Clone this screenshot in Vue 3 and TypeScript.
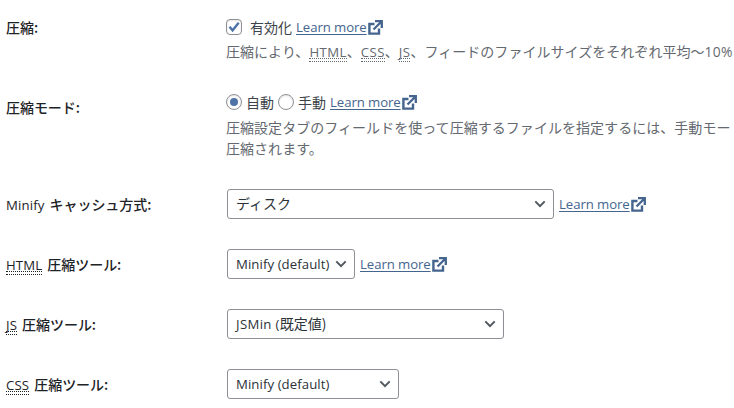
<script setup lang="ts">
import { ref, h } from 'vue'

const enabled = ref(true)
const mode = ref('auto')

interface Tool {
  abbr?: string
  latin?: string
  label: string
  latinValue?: string
  value?: string
  size: string
  more?: boolean
}

const tools: Tool[] = [
  { latin: 'Minify', label: 'キャッシュ方式:', value: 'ディスク', size: 'wide', more: true },
  { abbr: 'HTML', label: '圧縮ツール:', latinValue: 'Minify (default)', size: 'narrow', more: true },
  { abbr: 'JS', label: '圧縮ツール:', latinValue: 'JSMin (', value: '既定値)', size: 'medium' },
  { abbr: 'CSS', label: '圧縮ツール:', latinValue: 'Minify (default)', size: 'small' },
]

const LearnMore = () =>
  h('a', { class: 'more', href: '#' }, [
    h('span', { class: 'more-text' }, 'Learn more'),
    h('svg', { class: 'external', viewBox: '0 0 15 15' }, [
      h('path', { d: 'M6.5 4H1.4v9.6H11V8.5', fill: 'none', stroke: 'currentColor', 'stroke-width': '2.4' }),
      h('path', { d: 'M7 1.2h6.8v6.8M13.5 1.5 5.5 9.5', fill: 'none', stroke: 'currentColor', 'stroke-width': '2.3' }),
    ]),
  ])
</script>

<template>
  <main class="form">
    <section class="row row-enable">
      <div class="label">圧縮:</div>
      <div class="field">
        <div class="line">
          <label class="choice">
            <input v-model="enabled" type="checkbox" class="native" />
            <span class="box"><svg v-if="enabled" viewBox="0 0 16 16"><path d="M3.5 7.7 6.6 11.3 12.7 3.8" /></svg></span>
            <span class="enable-text">有効化</span>
          </label>
          <LearnMore />
        </div>
        <p class="hint">圧縮により、<abbr>HTML</abbr>、<abbr>CSS</abbr>、<abbr>JS</abbr>、フィードのファイルサイズをそれぞれ平均～<span class="latin percent">10%</span></p>
      </div>
    </section>
    <section class="row row-mode">
      <div class="label">圧縮モード:</div>
      <div class="field">
        <div class="line">
          <label class="choice"><input v-model="mode" type="radio" value="auto" class="native" /><span class="box round"><i v-if="mode === 'auto'" /></span><span>自動</span></label>
          <label class="choice second"><input v-model="mode" type="radio" value="manual" class="native" /><span class="box round"><i v-if="mode === 'manual'" /></span><span>手動</span></label>
          <LearnMore />
        </div>
        <p class="hint">圧縮設定タブのフィールドを使って圧縮するファイルを指定するには、手動モー<br />圧縮されます。</p>
      </div>
    </section>
    <section v-for="(tool, i) in tools" :key="i" class="row row-tool">
      <div class="label"><abbr v-if="tool.abbr">{{ tool.abbr }}</abbr><span v-else class="latin">{{ tool.latin }}</span><span class="after">{{ tool.label }}</span></div>
      <div class="field select-line">
        <div class="select" :class="tool.size" role="combobox" tabindex="0">
          <span class="value"><span v-if="tool.latinValue" class="latin">{{ tool.latinValue }}</span>{{ tool.value }}</span>
          <svg class="chevron" viewBox="0 0 12 8"><path d="M1.3 1.4 6 6.1l4.7-4.7" /></svg>
        </div>
        <LearnMore v-if="tool.more" />
      </div>
    </section>
  </main>
</template>

<style>
body { background: #fff; overflow: hidden; }
</style>

<style scoped>
.form {
  width: 734px;
  height: 408px;
  overflow: hidden;
  color: #3c434a;
  font: 14px/20px "Noto Sans CJK JP", sans-serif;
}
.row { display: grid; grid-template-columns: 220px 1fr; padding-left: 6px; white-space: nowrap; }
.row-enable { height: 76px; padding-top: 17px; box-sizing: border-box; }
.row-mode { height: 98px; padding-top: 16px; box-sizing: border-box; }
.row-tool { height: 60px; align-items: center; }
.label { color: #1d2327; font-weight: 500; letter-spacing: -.05px; }
.row-mode .label { padding-top: 5px; }
.latin, abbr, :deep(.more-text) { font-family: "Open Sans", "Noto Sans", sans-serif; font-size: 13.2px; }
.label .latin, .label abbr { font-weight: 500; letter-spacing: .15px; }
.label .after { margin-left: 5px; }
abbr { text-decoration: none; border-bottom: 1px dotted currentColor; position: relative; }
abbr::after { content: ""; position: absolute; left: 0; right: 0; bottom: 2px; border-bottom: 1px dotted currentColor; }
.hint { margin: 4px 0 0; color: #646970; line-height: 21px; letter-spacing: .04px; }
.row-mode .hint { margin-top: 5px; }
.hint abbr { letter-spacing: .4px; }
.hint .percent { font-size: 13.8px; letter-spacing: .4px; }
.line { display: flex; align-items: center; height: 20px; }
.choice { display: flex; align-items: center; }
.native { position: absolute; opacity: 0; pointer-events: none; }
.box { box-sizing: border-box; width: 16px; height: 16px; border: 1px solid #8c8f94; border-radius: 4px; box-shadow: inset 0 1px 2px rgb(0 0 0 / 10%); display: grid; place-items: center; margin-right: 4px; }
.box svg { width: 16px; height: 16px; margin: -1px; fill: none; stroke: #4f73a8; stroke-width: 2.4; }
.box.round { border-radius: 50%; }
.box i { width: 8px; height: 8px; border-radius: 50%; background: #4f73a8; }
.enable-text { margin-left: 4px; }
.second { margin-left: 4px; }
:deep(.more) { display: inline-flex; align-items: center; color: #45658f; margin-left: 4px; text-decoration: none; }
.select-line :deep(.more) { margin-left: 5px; }
:deep(.more-text) { text-decoration: underline; text-decoration-thickness: 1px; text-underline-offset: 2px; letter-spacing: -.08px; }
:deep(.external) { width: 15px; height: 15px; margin-left: 1px; }
.select-line { display: flex; align-items: center; margin-left: 1px; }
.select { display: flex; align-items: center; justify-content: space-between; box-sizing: border-box; height: 30px; border: 1px solid #8c8f94; border-radius: 3px; padding: 0 7px 0 8px; color: #2c3338; }
.select .latin { letter-spacing: .08px; }
.value { padding-bottom: 2px; }
.medium .latin { letter-spacing: .35px; }
.wide { width: 327px; }
.narrow { width: 128px; }
.medium { width: 277px; }
.small { width: 172px; }
.chevron { width: 12px; height: 8px; fill: none; stroke: #50575e; stroke-width: 2; }
</style>
